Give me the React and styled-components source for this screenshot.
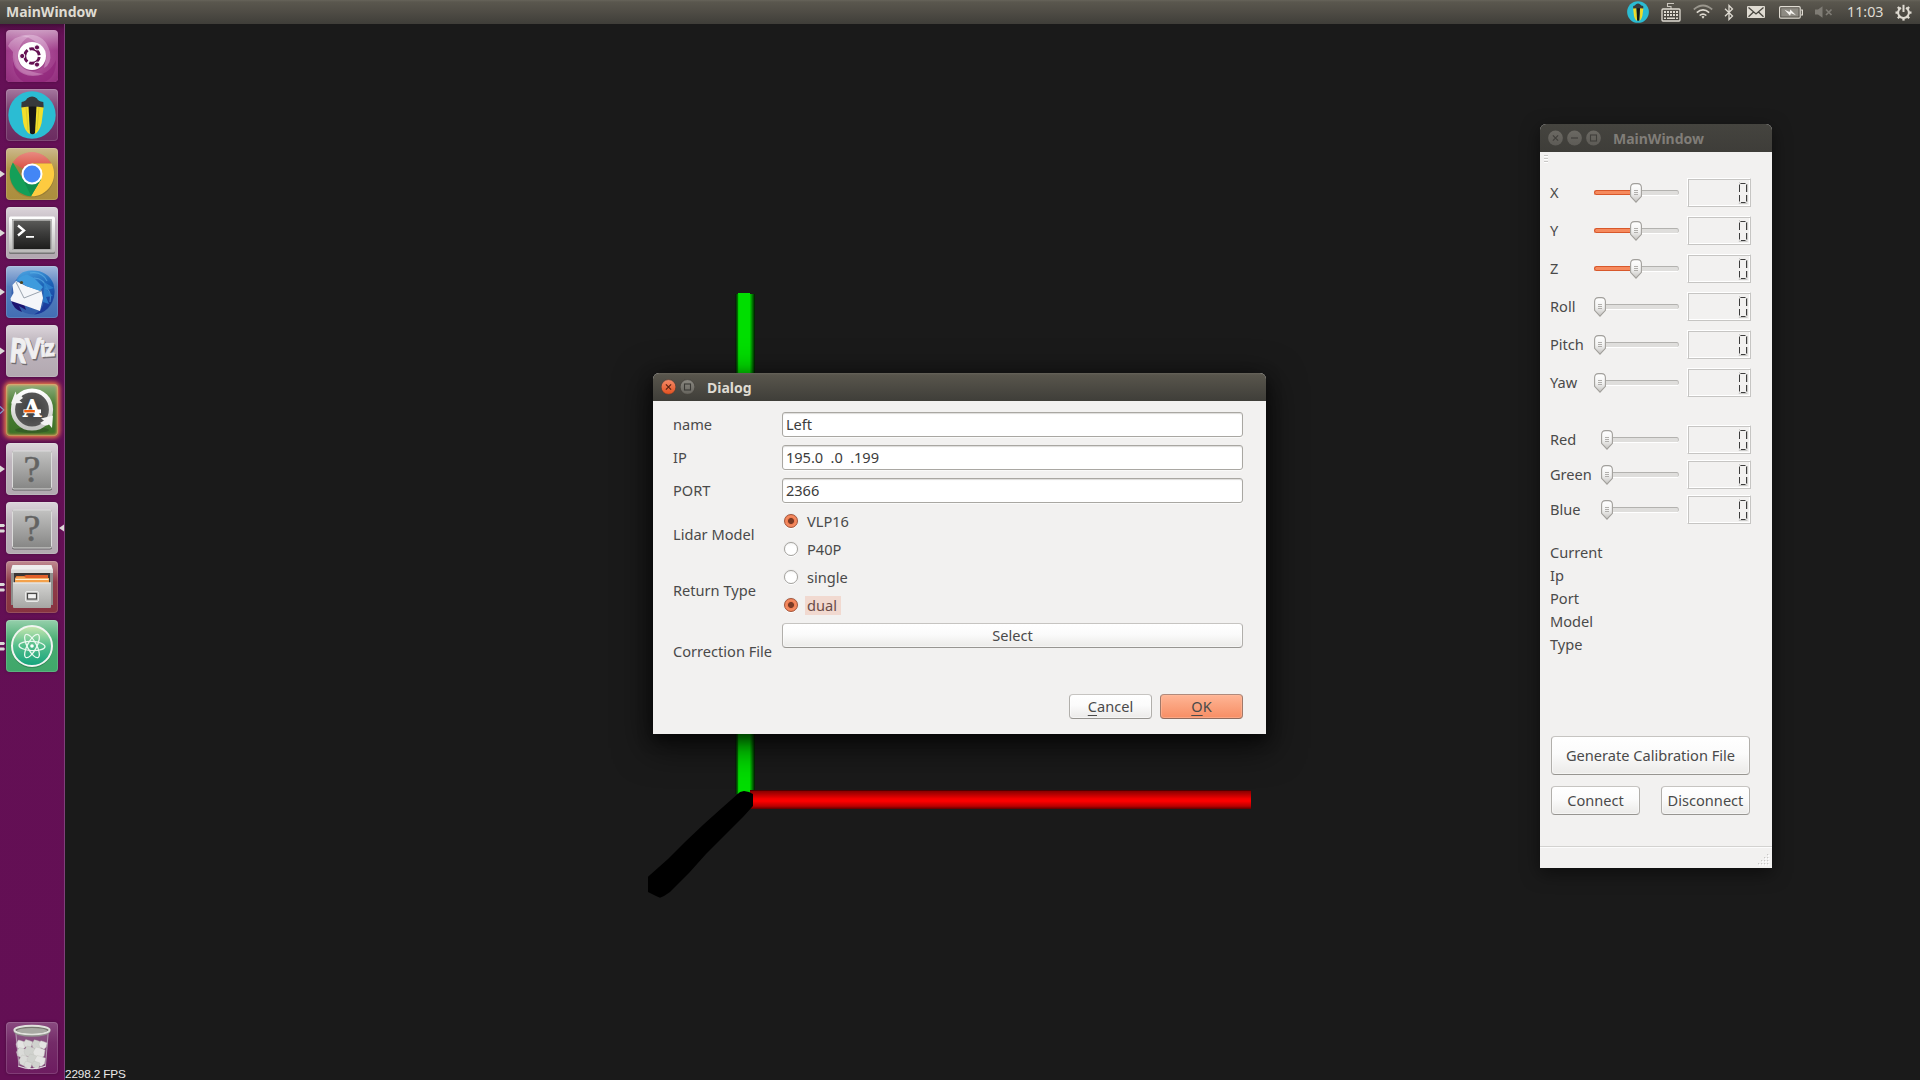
import React from "react";
import styled, { createGlobalStyle, css } from "styled-components";

const Global = createGlobalStyle`
  html, body { margin: 0; padding: 0; background: #1a1a1a; overflow: hidden; }
  * { box-sizing: border-box; }
`;

const Screen = styled.div`
  display: flex;
  flex-direction: column;
  width: 1920px;
  height: 1080px;
  overflow: hidden;
  background: #1a1a1a;
  color: #4a4a4a;
  font: 14.6px/20px "Noto Sans", "Open Sans", sans-serif;
`;

/* ---------- top panel ---------- */

const Panel = styled.header`
  display: flex;
  justify-content: space-between;
  height: 24px;
  flex: none;
  padding: 0 8px 0 6px;
  background: linear-gradient(#67645a 0, #5a574e 2px, #4f4c45 12px, #3f3e39 24px);
  color: #dfdbd2;
`;

const PanelTitle = styled.div`
  font-weight: 700;
  font-size: 14px;
  line-height: 23px;
`;

const Tray = styled.div`
  display: flex;
  align-items: center;
  height: 24px;
`;

const TrayItem = styled.div`
  display: flex;
  width: ${(p) => p.$w}px;
  margin-left: ${(p) => p.$gap || 0}px;
`;

const Clock = styled.div`
  width: 37px;
  margin-left: 14px;
  font-size: 14.3px;
  line-height: 24px;
  white-space: nowrap;
`;

/* ---------- launcher ---------- */

const Desktop = styled.div`
  display: flex;
  flex: 1;
  min-height: 0;
`;

const Launcher = styled.nav`
  display: flex;
  flex-direction: column;
  justify-content: space-between;
  width: 65px;
  padding: 6px 0 6px;
  border-right: 1px solid #80407a;
  background: linear-gradient(#430c39 0, #5c0f4e 5px, #651056 12px, #630f54 100%);
`;

const LauncherGroup = styled.div`
  display: flex;
  flex-direction: column;
  gap: 7px;
`;

const LauncherRow = styled.div`
  display: flex;
  align-items: center;
  height: 52px;
`;

const Marker = styled.div`
  display: flex;
  width: 6px;
  height: 12px;
`;

const Tile = styled.div`
  display: flex;
  width: 52px;
  height: 52px;
  border-radius: 4px;
  overflow: ${(p) => (p.$glow ? "visible" : "hidden")};
  background: ${(p) => p.$bg};
  box-shadow: ${(p) => (p.$glow ? "0 0 4px 2px #e8784a, inset 0 0 3px 1px #f0a060" : "0 0 3px rgba(0,0,0,.3)")},
    inset 0 0 0 1px rgba(255, 255, 255, 0.14);
`;

/* ---------- 3D view ---------- */

const Viewport = styled.main`
  position: relative;
  display: flex;
  align-items: flex-end;
  flex: 1;
`;

const Axes = styled.svg`
  position: absolute;
  left: 0;
  top: 0;
  display: block;
`;

const Fps = styled.div`
  height: 13px;
  color: #e9e9e9;
  font: 11.8px/14px "Liberation Sans", Arial, sans-serif;
  letter-spacing: -0.17px;
  white-space: nowrap;
`;

/* ---------- windows ---------- */

const Window = styled.section`
  position: absolute;
  left: ${(p) => p.$x}px;
  top: ${(p) => p.$y}px;
  display: flex;
  flex-direction: column;
  width: ${(p) => p.$w}px;
  height: ${(p) => p.$h}px;
  border-radius: 6px 6px 0 0;
  background: #f2f1f0;
  box-shadow: ${(p) =>
    p.$active ? "0 10px 34px 4px rgba(0,0,0,.6), 0 5px 14px rgba(0,0,0,.5)" : "0 5px 18px rgba(0,0,0,.5)"};
`;

const TitleBar = styled.div`
  display: flex;
  align-items: center;
  gap: 4px;
  height: 28px;
  flex: none;
  padding-left: 8px;
  border-radius: 6px 6px 0 0;
  background: ${(p) =>
    p.$active ? "linear-gradient(#66635a 0, #58554c 2px, #3f3e39 28px)" : "linear-gradient(#45443f 0, #3e3d39 100%)"};
  color: ${(p) => (p.$active ? "#dfdbd2" : "#807d78")};
`;

const WindowTitle = styled.div`
  margin-left: 8px;
  padding-top: 2px;
  font-weight: 700;
  font-size: 14px;
  line-height: 26px;
`;

const Label = styled.div`
  height: 20px;
  line-height: 18px;
  white-space: pre;
`;

const Button = styled.button`
  height: ${(p) => p.$h}px;
  width: ${(p) => p.$w}px;
  padding: 0 0 1px;
  border: 1px solid;
  border-radius: 4px;
  font: inherit;
  color: #4a4a4a;
  white-space: nowrap;
  ${(p) =>
    p.$primary
      ? css`
          border-color: #b08a7c #a0796a #8f6b5e;
          background: linear-gradient(#ffb596, #fba581 40%, #f78e65);
          box-shadow: inset 0 0 0 1px rgba(255, 190, 160, 0.5);
        `
      : css`
          border-color: #c6c4c1 #b1afab #979591;
          background: linear-gradient(#fff, #fbfbfb 45%, #ebeae8);
          box-shadow: inset 0 0 1px 1px rgba(255, 255, 255, 0.55);
        `}
`;

const Mnemonic = styled.span`
  text-decoration: underline;
  text-decoration-thickness: 1px;
  text-underline-offset: 3px;
  text-decoration-skip-ink: none;
`;

/* ---------- dialog ---------- */

const Form = styled.div`
  display: grid;
  grid-template-columns: 109px 461px;
  grid-template-rows: 25px 25px 25px 48px 48px 57px;
  row-gap: 8px;
  align-items: center;
  padding: 11px 0 0 20px;
`;

const TextField = styled.div`
  height: 25px;
  padding: 0 3px;
  border: 1px solid #a9a7a2;
  border-radius: 3px;
  background: #fff;
  box-shadow: inset 0 1px 1px #dddcda, 0 1px 0 #fafaf9;
  color: #3c3c3c;
  line-height: 22px;
  letter-spacing: -0.05px;
  white-space: pre;
`;

const RadioGroup = styled.div`
  display: flex;
  flex-direction: column;
  gap: 8px;
  padding-left: 2px;
`;

const RadioRow = styled.div`
  display: flex;
  align-items: center;
  gap: 7px;
  height: 20px;
`;

const RadioDot = styled.div`
  width: 14px;
  height: 14px;
  border: 1px solid ${(p) => (p.$on ? "#a3543a" : "#a4a29e")};
  border-radius: 50%;
  background: ${(p) =>
    p.$on
      ? "radial-gradient(circle, #7b3a25 0, #7b3a25 2.6px, #f07c50 3.4px, #f58d63 5px, #ef7243 7px)"
      : "linear-gradient(#f6f6f5, #fff 30%)"};
  box-shadow: 0 1px 0 #fff, 0 0 1px #bbb;
`;

const RadioText = styled.div`
  height: 19px;
  padding: 0 4px 0 2px;
  line-height: 18px;
  color: ${(p) => (p.$focus ? "#6a4c47" : "#4a4a4a")};
  background: ${(p) => (p.$focus ? "#f1d9d0" : "transparent")};
`;

const FileCell = styled.div`
  display: flex;
  align-items: flex-start;
  height: 57px;
`;

const DialogActions = styled.div`
  display: flex;
  justify-content: flex-end;
  gap: 8px;
  margin-top: auto;
  padding: 0 23px 15px 0;
`;

/* ---------- calibration panel ---------- */

const ToolHandle = styled.div`
  display: flex;
  height: 26px;
  padding: 3px 0 0 4px;
`;

const SliderList = styled.div`
  display: flex;
  flex-direction: column;
  gap: ${(p) => p.$gap}px;
  margin-bottom: ${(p) => p.$after}px;
  padding: 0 21px 0 10px;
`;

const SliderRow = styled.div`
  display: grid;
  grid-template-columns: ${(p) => p.$labelW}px 1fr 64px;
  align-items: center;
  height: 29px;
`;

const Track = styled.div`
  display: flex;
  align-items: center;
  height: 20px;
  margin-right: 8px;
`;

const Filled = styled.div`
  width: 36px;
  height: 5px;
  margin: -1px 0 0;
  border: 1px solid #d8582b;
  border-right: 0;
  border-radius: 3px 0 0 3px;
  background: #f68a5d;
`;

const Knob = styled.svg`
  display: block;
  flex: none;
`;

const Groove = styled.div`
  flex: 1;
  height: 5px;
  margin-top: -1px;
  border-top: 1px solid #b3b2af;
  border-right: 1px solid #c4c3c0;
  border-radius: 0 3px 3px 0;
  background: #dfdedc;
  box-shadow: 0 1px 0 #fff;
`;

const Lcd = styled.div`
  display: flex;
  justify-content: flex-end;
  width: 64px;
  height: 29px;
  padding: 2px 1px 0 0;
  border: 1px solid;
  border-color: #fff #c6c5c3 #c6c5c3 #fff;
  box-shadow: inset 1px 1px 0 #c6c5c3, inset -1px -1px 0 #fff;
`;

const InfoList = styled.div`
  display: flex;
  flex-direction: column;
  gap: 3px;
  padding: 0 10px;
`;

const ButtonGrid = styled.div`
  display: grid;
  grid-template-columns: 89px 89px;
  column-gap: 21px;
  row-gap: 11px;
  margin: auto 0 31px;
  padding-left: 11px;
`;

const Wide = styled.div`
  display: flex;
  grid-column: 1 / 3;
`;

const StatusBar = styled.footer`
  display: flex;
  align-items: flex-end;
  justify-content: flex-end;
  height: 22px;
  padding: 0 2px 2px 0;
  border-top: 1px solid #d3d2d0;
  box-shadow: inset 0 1px 0 #fcfcfc;
`;

/* ---------- drawings ---------- */

const Lantern = () => (
  <g>
    <circle cx="26" cy="26" r="23.7" fill="#2bbcd3" />
    <path d="M15.3 17.5 L23 17 L24 45 Q19 43 17.2 34 Z M37.7 17.5 L30 17 L28.6 45 Q33.5 43 35.6 34 Z" fill="#f2df2c" />
    <path d="M22.5 17 H30.5 L29 44 Q26.5 46.5 24 44 Z" fill="#161616" />
    <path d="M15.3 18.6 L15.6 13 Q20 12 21 9.5 Q26.2 5.5 31 9.5 Q32 12 37.3 13 L37.7 18.6 Q26 16.5 15.3 18.6 Z" fill="#37393b" />
    <path d="M20 18 L22 41 M33 18 L31 41" stroke="#c9ba26" strokeWidth="0.6" />
  </g>
);

const UbuntuIcon = () => (
  <svg width="52" height="52" viewBox="0 0 52 52">
    <defs>
      <radialGradient id="ub" cx=".5" cy=".5" r=".75">
        <stop offset="0" stopColor="#c070ae" />
        <stop offset=".5" stopColor="#a4438f" />
        <stop offset="1" stopColor="#8e2a79" />
      </radialGradient>
      <linearGradient id="ubs" x2="0" y2="1">
        <stop offset="0" stopColor="#fff" stopOpacity=".5" />
        <stop offset=".4" stopColor="#fff" stopOpacity="0" />
      </linearGradient>
    </defs>
    <rect width="52" height="52" rx="4" fill="url(#ub)" />
    <path d="M14 6 Q38 0 44 22 Q46 34 38 38 Q42 22 30 12 Q22 6 14 6Z" fill="#d9a6cf" opacity=".55" />
    <path d="M8 24 Q8 46 30 45 Q44 44 50 30 Q50 48 38 52 H18 Q4 44 8 24Z" fill="#8a1b74" opacity=".5" />
    <path d="M2 16 Q8 4 24 6 Q12 12 12 28 Q16 42 38 44 Q20 50 10 38 Q6 32 7 22" fill="#e3b7da" opacity=".4" />
    <rect width="52" height="52" rx="4" fill="url(#ubs)" />
    <circle cx="26" cy="27" r="14.3" fill="#7b1f69" opacity=".4" />
    <circle cx="26" cy="26" r="14" fill="#fff" />
    <circle cx="26" cy="26" r="7.3" fill="none" stroke="#651053" strokeWidth="2.9" strokeDasharray="13.2 2.09" strokeDashoffset="-1" />
    <g fill="#651053" stroke="#fff" strokeWidth="1">
      <circle cx="16.2" cy="26" r="2.6" />
      <circle cx="31" cy="17.4" r="2.6" />
      <circle cx="31" cy="34.6" r="2.6" />
    </g>
  </svg>
);

const LanternIcon = () => (
  <svg width="52" height="52" viewBox="0 0 52 52">
    <Lantern />
  </svg>
);

const ChromeIcon = () => (
  <svg width="52" height="52" viewBox="0 0 52 52">
    <defs>
      <linearGradient id="chr" x2="0" y2="1">
        <stop offset="0" stopColor="#e88a80" />
        <stop offset="1" stopColor="#d63f33" />
      </linearGradient>
    </defs>
    <circle cx="26" cy="27" r="22.5" fill="#6d5a22" opacity=".3" />
    <path d="M26 26 L6.7 14.8 A22.3 22.3 0 0 1 45.3 15.6 L26 15.6 Z" fill="url(#chr)" />
    <path d="M26 26 L26 15.6 L45.6 15.6 A22.3 22.3 0 0 1 25 48.2 L35 31.2 Z" fill="#fdcb40" />
    <path d="M26 26 L35 31.2 L25 48.2 A22.3 22.3 0 0 1 6.9 14.6 L17 31.2 Z" fill="#149f58" />
    <path d="M17 31.2 L25 47.8 L35 31.4 Z" fill="#0f8e4e" />
    <circle cx="26" cy="26" r="10.5" fill="#fff" />
    <circle cx="26" cy="26" r="8.5" fill="#4386f5" />
  </svg>
);

const TerminalIcon = () => (
  <svg width="52" height="52" viewBox="0 0 52 52">
    <defs>
      <linearGradient id="te" x2="0" y2="1">
        <stop offset="0" stopColor="#5a5a58" />
        <stop offset=".45" stopColor="#3c3c3b" />
        <stop offset="1" stopColor="#1d1d1c" />
      </linearGradient>
      <linearGradient id="tf" x2="0" y2="1">
        <stop offset="0" stopColor="#fff" />
        <stop offset="1" stopColor="#b9b9b7" />
      </linearGradient>
    </defs>
    <rect x="3" y="10" width="46" height="37" rx="1.5" fill="#777" />
    <rect x="3" y="9.5" width="46" height="36" rx="1.5" fill="url(#tf)" />
    <rect x="6.5" y="12.5" width="39" height="30" fill="#e8e8e6" stroke="#909090" strokeWidth=".6" />
    <rect x="7.5" y="13.5" width="37" height="28.5" fill="url(#te)" />
    <path d="M12 18.5 L18 23.5 L12 28.5" fill="none" stroke="#fff" strokeWidth="2.4" />
    <path d="M20 29.8 H28" stroke="#fff" strokeWidth="1.8" />
  </svg>
);

const ThunderbirdIcon = () => (
  <svg width="52" height="52" viewBox="0 0 52 52">
    <defs>
      <linearGradient id="tb" x1="0" y1="0" x2=".3" y2="1">
        <stop offset="0" stopColor="#4fa8e4" />
        <stop offset=".5" stopColor="#1c64b8" />
        <stop offset="1" stopColor="#1b3a9a" />
      </linearGradient>
    </defs>
    <circle cx="27" cy="27" r="21.5" fill="#2a55a6" opacity=".65" />
    <path d="M10 16 Q12 5 25 4.5 Q42 4 47.5 18 Q51 32 42 42 Q36 48 28 48.5 Q38 43 37.5 35 L36 20 L22 13 Z" fill="url(#tb)" />
    <path d="M24 7 Q36 5 41 15 M28 12 Q38 12 42 24 M39 22 Q46 24 44 36" stroke="#6ec1ef" strokeWidth="1.2" fill="none" opacity=".5" />
    <path d="M38 16 L48 22 L41 24 L47 30 L40 31 L43 38 L37 36 Z" fill="#2f86d0" opacity=".8" />
    <path d="M5 34 Q7 43 16 46 L13 40 L20 44 L18 38 Z" fill="#1c1470" />
    <path d="M4.5 32.5 L7.5 27 L6.5 19 L10 15 L20 20 L35.5 25 L37 32 L34 45 L20 40 L5 35 Z" fill="#f4f6f9" />
    <path d="M10 16 L18 32 L35.5 25" fill="none" stroke="#9aa3ae" strokeWidth="1" />
    <path d="M10.5 19 Q11 10 21 8.5 L28 12 L37 21 L34 25 L20 20 L12 14Z" fill="#3f9bdd" />
    <circle cx="15.5" cy="16.5" r="1.6" fill="#4d4520" />
  </svg>
);

const RVIZ_LETTERS = [
  { ch: "R", x: 4, y: 37.5, size: 33, sx: 0.78, tilt: "rotate(5 12 26)" },
  { ch: "V", x: 19.5, y: 33.5, size: 28, sx: 0.82, tilt: "rotate(-2 28 24)" },
  { ch: "i", x: 34.5, y: 31.5, size: 22, sx: 0.85, tilt: "rotate(-4 36 25)" },
  { ch: "z", x: 38.5, y: 31, size: 24, sx: 0.9, tilt: "rotate(-4 43 25)" },
];

const RvizIcon = () => (
  <svg width="52" height="52" viewBox="0 0 52 52">
    <g fontFamily="Lato, sans-serif" fontWeight="900" strokeWidth="1.1" strokeLinejoin="round">
      {RVIZ_LETTERS.map((l) => (
        <g key={l.ch} transform={l.tilt}>
          <g transform={`translate(${l.x} ${l.y}) scale(${l.sx} 1)`} fontSize={l.size}>
            <text x="1.4" y="1.5" fill="#716c70" stroke="#716c70">{l.ch}</text>
            <text x="0" y="0" fill="#f0eff0" stroke="#f0eff0">{l.ch}</text>
          </g>
        </g>
      ))}
    </g>
  </svg>
);

const UpdaterIcon = () => (
  <svg width="52" height="52" viewBox="0 0 52 52">
    <defs>
      <linearGradient id="up" x2="0" y2="1">
        <stop offset="0" stopColor="#fff" />
        <stop offset="1" stopColor="#c3c3c1" />
      </linearGradient>
      <radialGradient id="upd">
        <stop offset="0" stopColor="#3a3a3a" />
        <stop offset="1" stopColor="#5a5a5a" />
      </radialGradient>
    </defs>
    <ellipse cx="26" cy="46" rx="17" ry="3" fill="#2c4a22" opacity=".5" />
    <circle cx="26" cy="25.5" r="19" fill="url(#upd)" stroke="url(#up)" strokeWidth="4.2" />
    <path d="M5 19.5 L9.5 7.5 L11 12 Q14 9 17 14 L13.5 16.5 L16.5 19 Z" fill="#f3f3f2" />
    <path d="M47 31.5 L46 44 L43 40.5 Q39 43 34 39 L38 36.5 L35 34.5 Z" fill="#f3f3f2" />
    <text x="26" y="33" textAnchor="middle" fontFamily="DejaVu Serif, serif" fontWeight="700" fontSize="24" fill="#fff">A</text>
    <rect x="17.5" y="25.4" width="17.5" height="3.8" fill="#fff" />
    <rect x="18.2" y="26" width="10.6" height="2.4" fill="#f2600c" />
  </svg>
);

const UnknownIcon = () => (
  <svg width="52" height="52" viewBox="0 0 52 52">
    <defs>
      <linearGradient id="qm" x2="0" y2="1">
        <stop offset="0" stopColor="#c2c2c1" />
        <stop offset="1" stopColor="#868685" />
      </linearGradient>
    </defs>
    <rect x="6" y="8" width="40" height="39.5" rx="2" fill="#5f5d5e" />
    <rect x="6.5" y="8" width="39" height="38" rx="1.5" fill="url(#qm)" stroke="#dcdcdb" strokeWidth="1" />
    <text x="26" y="38.8" textAnchor="middle" fontFamily="Liberation Serif, serif" fontSize="38" fill="#636362" stroke="#636362" strokeWidth=".5">?</text>
  </svg>
);

const FilesIcon = () => (
  <svg width="52" height="52" viewBox="0 0 52 52">
    <defs>
      <linearGradient id="fi" x2="0" y2="1">
        <stop offset="0" stopColor="#d4d4d2" />
        <stop offset="1" stopColor="#a6a6a4" />
      </linearGradient>
    </defs>
    <path d="M6.5 4 H45.5 L47 9 V44 H5 V9 Z" fill="#8e8e8c" />
    <path d="M6.5 4 H45.5 L47 9 H5 Z" fill="#efefee" />
    <rect x="5" y="8.5" width="42" height="3.5" fill="#dcdcda" />
    <rect x="8" y="12" width="36" height="10" fill="#3b3634" />
    <path d="M10 15 H18 L20 14 H42 V22 H9 Z" fill="#e2602a" />
    <path d="M9 17 L11 15.5 H18 L20 17 H43 V22 H9Z" fill="#f3a14b" />
    <rect x="9.5" y="17.8" width="33" height="1.2" fill="#fff2d5" />
    <path d="M7 21.5 H45 V46 Q45 47 44 47 H8 Q7 47 7 46 Z" fill="url(#fi)" />
    <path d="M7 22 H45" stroke="#ececeb" strokeWidth="1" />
    <rect x="19.5" y="30.5" width="13" height="10" rx="1.5" fill="#c9c9c7" stroke="#e9e9e8" strokeWidth="1" />
    <rect x="21.5" y="32.5" width="9" height="5.5" fill="#f2f2f1" stroke="#4a4a49" strokeWidth="1.2" />
  </svg>
);

const AtomIcon = () => (
  <svg width="52" height="52" viewBox="0 0 52 52">
    <defs>
      <linearGradient id="at" x2="0" y2="1">
        <stop offset="0" stopColor="#c9e8b0" />
        <stop offset=".5" stopColor="#52bd8b" />
        <stop offset="1" stopColor="#12a37c" />
      </linearGradient>
    </defs>
    <circle cx="26" cy="27" r="21" fill="#1e5a3c" opacity=".4" />
    <circle cx="26" cy="26" r="20" fill="url(#at)" stroke="#f1f5f1" strokeWidth="2" />
    <g fill="none" stroke="#e9f8ee" strokeWidth="1.3">
      <ellipse cx="26" cy="26" rx="13" ry="4.6" transform="rotate(3 26 26)" />
      <ellipse cx="26" cy="26" rx="13" ry="4.6" transform="rotate(62 26 26)" />
      <ellipse cx="26" cy="26" rx="13" ry="4.6" transform="rotate(118 26 26)" />
    </g>
    <circle cx="26" cy="26" r="1.8" fill="#fff" />
  </svg>
);

const CRUMPLES = [
  [15, 23, 5], [22, 22, 4.5], [31, 23, 5.2], [37, 23, 4.2], [16, 31, 5.5], [24, 30, 6],
  [33, 31, 6], [19, 39, 6], [27, 38, 6], [34, 39, 5.5], [22, 43, 4], [30, 43, 4],
];

const TrashIcon = () => (
  <svg width="52" height="52" viewBox="0 0 52 52">
    <path d="M9 10 H43 L39.5 45 Q26 50 12.5 45 Z" fill="#a993a8" opacity=".32" />
    {CRUMPLES.map(([x, y, r], i) => (
      <path
        key={i}
        d={`M${x - r} ${y - 1} L${x - r / 2} ${y - r} L${x + 1} ${y - r + 1} L${x + r} ${y - r / 2} L${x + r - 1} ${y + r / 2} L${x + 1} ${y + r} L${x - r + 1} ${y + r / 2}Z`}
        fill={i % 3 === 0 ? "#e4e4e2" : i % 3 === 1 ? "#dadbd8" : "#d0d2ce"}
        stroke="#bfc1bc"
        strokeWidth=".4"
      />
    ))}
    <path d="M12 44 Q26 49.5 40 44" stroke="#e7e3e6" strokeWidth="1" fill="none" />
    <path d="M10 12 L13 44 M42 12 L39.5 44" stroke="#bda9bb" strokeWidth=".8" />
    <ellipse cx="26" cy="9.6" rx="18.3" ry="5.2" fill="#92938f" />
    <ellipse cx="26" cy="8" rx="17.6" ry="4.2" fill="#77766f" stroke="#e1e2dd" strokeWidth="2" />
    <ellipse cx="26" cy="8.7" rx="15" ry="2.8" fill="#a8a9a3" />
  </svg>
);

const MARKS = {
  one: <path d="M0 2.5 L5 6 L0 9.5 Z" fill="#dcdad8" />,
  outline: <path d="M0 2.5 L4 6 L0 9.5" fill="none" stroke="#6fa8e8" strokeWidth="1.1" />,
  two: (
    <g fill="#dcdad8">
      <path d="M0 2 H4 L5 3.5 L4 5 H0Z" />
      <path d="M0 7.5 H4 L5 9 L4 10.5 H0Z" />
    </g>
  ),
  focus: <path d="M6 2.5 L1 6 L6 9.5 Z" fill="#dcdad8" />,
};

const Mark = ({ kind }) => (
  <Marker>
    {kind && (
      <svg width="6" height="12" viewBox="0 0 6 12">
        {MARKS[kind]}
      </svg>
    )}
  </Marker>
);

const GREY_TILE = "linear-gradient(#dcd5db 0, #bfb6be 35%, #b2a8b0 100%)";

const APPS = [
  { bg: "#a03a8c", icon: UbuntuIcon },
  { bg: "linear-gradient(#a5789f, #7a3f70 40%, #6b2b60)", icon: LanternIcon },
  { bg: "linear-gradient(#cdb98c, #b09448 40%, #ac8e3d)", icon: ChromeIcon, mark: "one" },
  { bg: GREY_TILE, icon: TerminalIcon, mark: "one" },
  { bg: "linear-gradient(#a3bbdd, #5680bf 40%, #426eb3)", icon: ThunderbirdIcon, mark: "one" },
  { bg: GREY_TILE, icon: RvizIcon, mark: "one" },
  { bg: "linear-gradient(#8fae7c, #497d35 40%, #3b7126)", icon: UpdaterIcon, mark: "outline", glow: true },
  { bg: GREY_TILE, icon: UnknownIcon, mark: "one" },
  { bg: GREY_TILE, icon: UnknownIcon, mark: "two", focused: true },
  { bg: "linear-gradient(#c08c92, #8f3c49 40%, #873340)", icon: FilesIcon, mark: "two" },
  { bg: "linear-gradient(#96d0ac, #47ab70 40%, #40a76a)", icon: AtomIcon, mark: "two" },
];

const LauncherItem = ({ app }) => {
  const Icon = app.icon;
  return (
    <LauncherRow>
      <Mark kind={app.mark} />
      <Tile $bg={app.bg} $glow={app.glow}>
        <Icon />
      </Tile>
      <Mark kind={app.focused ? "focus" : null} />
    </LauncherRow>
  );
};

/* tray drawings */

const KeyboardIcon = () => (
  <svg width="20" height="20" viewBox="0 0 20 20" fill="none" stroke="#dfdbd2">
    <path d="M10 7 V4.5 H6.5 V1.5 H13" strokeWidth="1.1" opacity=".85" />
    <rect x="1" y="7" width="18" height="12" rx="1" strokeWidth="1.3" />
    <path d="M3 10 H17 M3 13 H17" strokeWidth="1.9" strokeDasharray="2 1" />
    <path d="M3 16.3 H17" strokeWidth="1.6" strokeDasharray="2 1 8 1" />
  </svg>
);

const WifiIcon = () => (
  <svg width="20" height="16" viewBox="0 0 20 16" fill="none" stroke="#dfdbd2">
    <path d="M0.8 5.5 Q10 -2.5 19.2 5.5" strokeWidth="1.7" opacity=".5" />
    <path d="M3.8 8.6 Q10 3.2 16.2 8.6" strokeWidth="1.7" />
    <path d="M6.6 11.5 Q10 8.6 13.4 11.5" strokeWidth="1.6" />
    <path d="M8.5 12.8 Q10 11.4 11.5 12.8 L10 14.8 Z" fill="#dfdbd2" stroke="none" />
  </svg>
);

const BluetoothIcon = () => (
  <svg width="10" height="17" viewBox="0 0 10 17" fill="none" stroke="#dfdbd2" strokeWidth="1.3">
    <path d="M1 4.8 L8.5 12 L5 15.5 V1.5 L8.5 5 L1 12.2" />
  </svg>
);

const MailIcon = () => (
  <svg width="18" height="12" viewBox="0 0 18 12">
    <rect width="18" height="12" rx="1" fill="#dfdbd2" />
    <path d="M1.5 1.5 L9 8 L16.5 1.5 M1.5 10.8 L6.5 6 M16.5 10.8 L11.5 6" stroke="#4a4841" strokeWidth="1.3" fill="none" />
  </svg>
);

const BatteryIcon = () => (
  <svg width="24" height="13" viewBox="0 0 24 13">
    <rect x=".6" y=".6" width="20.6" height="11.6" rx="1.2" fill="none" stroke="#dfdbd2" strokeWidth="1.2" />
    <rect x="2.2" y="2.2" width="17.4" height="8.4" fill="#8d8a82" />
    <path d="M22 4 H23.4 V9 H22" fill="none" stroke="#dfdbd2" strokeWidth="1.2" />
    <path d="M5.5 3.8 L10.6 6 L11.4 3.4 L17 9.2 L12 7.3 L11 9.8 Z" fill="#f4f2ee" />
  </svg>
);

const MuteIcon = () => (
  <svg width="18" height="12" viewBox="0 0 18 12">
    <path d="M0 3.5 H3 L7.5 .3 V11.7 L3 8.5 H0 Z" fill="#7f7c75" />
    <path d="M11 3.5 L16.5 9 M16.5 3.5 L11 9" stroke="#7f7c75" strokeWidth="1.7" />
  </svg>
);

const GearIcon = () => (
  <svg width="17" height="17" viewBox="0 0 17 17" fill="none" stroke="#dfdbd2">
    <path d="M6 3.8 A5.4 5.4 0 1 0 11 3.8" strokeWidth="2" />
    <path d="M8.5 0.8 V8" strokeWidth="2" />
    {[45, 90, 135, 180, 225, 270, 315].map((a) => (
      <path key={a} d="M8.5 3 V0.6" strokeWidth="2.3" transform={`rotate(${a} 8.5 8.6)`} />
    ))}
  </svg>
);

/* window drawings */

const WindowControl = ({ kind, active }) => {
  const close = active && kind === "close";
  const stroke = close ? "#5c2312" : active ? "#3a3935" : "#403f3b";
  const id = `wc-${kind}-${active ? "on" : "off"}`;
  return (
    <svg width="15" height="16" viewBox="0 0 15 16">
      <defs>
        <linearGradient id={id} x2="0" y2="1">
          <stop offset="0" stopColor={close ? "#f58b69" : active ? "#8b8981" : "#6b6963"} />
          <stop offset="1" stopColor={close ? "#e2501f" : active ? "#66645d" : "#5d5b56"} />
        </linearGradient>
      </defs>
      <circle cx="7.5" cy="8" r="7.4" fill={`url(#${id})`} stroke={active ? "#3a3833" : "none"} strokeWidth=".6" />
      {kind === "close" && <path d="M4.9 5.4 L10.1 10.6 M10.1 5.4 L4.9 10.6" stroke={stroke} strokeWidth="1.2" />}
      {kind === "min" && <path d="M4 8 H11" stroke={stroke} strokeWidth="1.2" />}
      {kind === "max" && <rect x="4.5" y="5" width="6" height="6" fill="none" stroke={stroke} strokeWidth="1.1" />}
    </svg>
  );
};

const SliderKnob = () => (
  <Knob width="12" height="20" viewBox="0 0 12 20">
    <defs>
      <linearGradient id="kn" x2="0" y2="1">
        <stop offset="0" stopColor="#fff" />
        <stop offset=".5" stopColor="#f3f3f2" />
        <stop offset="1" stopColor="#c4c2bf" />
      </linearGradient>
    </defs>
    <path d="M.6 4.5 Q.6 .6 4.5 .6 H7.5 Q11.4 .6 11.4 4.5 V13.4 L6 19.2 L.6 13.4 Z" fill="url(#kn)" stroke="#a19f9b" strokeWidth="1.1" />
    <path d="M4 7.5 H8 M4 9.5 H8 M4 11.5 H8" stroke="#a9a7a4" strokeWidth=".9" />
  </Knob>
);

const LcdZero = () => (
  <svg width="11" height="24" viewBox="0 0 11 24">
    <g stroke="#b9b8b6" strokeWidth="1">
      <path d="M1.2 1.5 L3 3 M.8 22.2 H9.5" />
    </g>
    <g stroke="#3d3d3d" strokeWidth="1">
      <path d="M2.5 2.5 H7.5 M3 21.5 H7.5 M1.5 3.5 V11 M8.5 3.5 V11 M1.5 14 V20.5 M8.5 14 V20.5" />
    </g>
    <path d="M9.5 3 V11 M9.5 14 V21" stroke="#c9c8c6" strokeWidth="1" />
  </svg>
);

const SliderControl = ({ label, mid, labelW }) => (
  <SliderRow $labelW={labelW}>
    <Label>{label}</Label>
    <Track>
      {mid && <Filled />}
      <SliderKnob />
      <Groove />
    </Track>
    <Lcd>
      <LcdZero />
    </Lcd>
  </SliderRow>
);

const Radio = ({ text, on, focus }) => (
  <RadioRow>
    <RadioDot $on={on} />
    <RadioText $focus={focus}>{text}</RadioText>
  </RadioRow>
);

const AxesDrawing = () => (
  <Axes width="1855" height="1056" viewBox="65 24 1855 1056">
    <defs>
      <linearGradient id="gx" x2="1" y2="0">
        <stop offset="0" stopColor="#001c00" />
        <stop offset=".12" stopColor="#007d00" />
        <stop offset=".16" stopColor="#00de00" />
        <stop offset=".72" stopColor="#00de00" />
        <stop offset=".84" stopColor="#008a00" />
        <stop offset="1" stopColor="#001600" />
      </linearGradient>
      <linearGradient id="rx" x2="0" y2="1">
        <stop offset="0" stopColor="#2a0000" />
        <stop offset=".07" stopColor="#8c0000" />
        <stop offset=".45" stopColor="#f00000" />
        <stop offset=".58" stopColor="#ff0000" />
        <stop offset=".85" stopColor="#b80000" />
        <stop offset="1" stopColor="#5c0000" />
      </linearGradient>
    </defs>
    <rect x="735.5" y="294" width="19.5" height="500" fill="url(#gx)" />
    <rect x="738" y="293" width="12" height="1" fill="#00de00" />
    <rect x="750" y="790" width="501" height="19" fill="url(#rx)" />
    <path d="M648 876.7 V892 L656 896 L660 897.7 L664 896 L670 892 L689 873 L706 854 L724 836 L743 817 L753 806 V794 L749 792 L744 791 L740 792 L723 807 L704 824 L685 842 L668 859 Z" fill="#000" />
  </Axes>
);

const SizeGrip = () => (
  <svg width="12" height="12" viewBox="0 0 12 12">
    {[0, 1, 2, 3].map((r) =>
      [0, 1, 2, 3].filter((c) => c >= 3 - r).map((c) => (
        <g key={`${r}${c}`}>
          <rect x={1 + c * 3} y={1 + r * 3} width="1.5" height="1.5" fill="#fff" />
          <rect x={c * 3} y={r * 3} width="1.2" height="1.2" fill="#c9c8c6" />
        </g>
      ))
    )}
  </svg>
);

const CalibrationWindow = () => (
  <Window $x={1475} $y={100} $w={232} $h={744}>
    <TitleBar>
      <WindowControl kind="close" />
      <WindowControl kind="min" />
      <WindowControl kind="max" />
      <WindowTitle>MainWindow</WindowTitle>
    </TitleBar>
    <ToolHandle>
      <svg width="5" height="9" viewBox="0 0 5 9">
        <path d="M0 .5 H4 M0 3.5 H4 M0 6.5 H4" stroke="#c9c8c6" />
        <path d="M0 1.5 H4 M0 4.5 H4 M0 7.5 H4" stroke="#fff" />
      </svg>
    </ToolHandle>
    <SliderList $gap={9} $after={28}>
      {["X", "Y", "Z"].map((l) => (
        <SliderControl key={l} label={l} labelW={44} mid />
      ))}
      {["Roll", "Pitch", "Yaw"].map((l) => (
        <SliderControl key={l} label={l} labelW={44} />
      ))}
    </SliderList>
    <SliderList $gap={6} $after={19}>
      {["Red", "Green", "Blue"].map((l) => (
        <SliderControl key={l} label={l} labelW={51} />
      ))}
    </SliderList>
    <InfoList>
      {["Current", "Ip", "Port", "Model", "Type"].map((l) => (
        <Label key={l}>{l}</Label>
      ))}
    </InfoList>
    <ButtonGrid>
      <Wide>
        <Button $w={199} $h={39}>Generate Calibration File</Button>
      </Wide>
      <Button $w={89} $h={29}>Connect</Button>
      <Button $w={89} $h={29}>Disconnect</Button>
    </ButtonGrid>
    <StatusBar>
      <SizeGrip />
    </StatusBar>
  </Window>
);

const LidarDialog = () => (
  <Window $x={588} $y={349} $w={613} $h={361} $active>
    <TitleBar $active>
      <WindowControl kind="close" active />
      <WindowControl kind="max" active />
      <WindowTitle>Dialog</WindowTitle>
    </TitleBar>
    <Form>
      <Label>name</Label>
      <TextField>Left</TextField>
      <Label>IP</Label>
      <TextField>{"195.0  .0  .199"}</TextField>
      <Label>PORT</Label>
      <TextField>2366</TextField>
      <Label>Lidar Model</Label>
      <RadioGroup>
        <Radio text="VLP16" on />
        <Radio text="P40P" />
      </RadioGroup>
      <Label>Return Type</Label>
      <RadioGroup>
        <Radio text="single" />
        <Radio text="dual" on focus />
      </RadioGroup>
      <Label>Correction File</Label>
      <FileCell>
        <Button $w={461} $h={25}>Select</Button>
      </FileCell>
    </Form>
    <DialogActions>
      <Button $w={83} $h={25}>
        <Mnemonic>C</Mnemonic>ancel
      </Button>
      <Button $w={83} $h={25} $primary>
        <Mnemonic>O</Mnemonic>K
      </Button>
    </DialogActions>
  </Window>
);

export default function App() {
  return (
    <Screen>
      <Global />
      <Panel>
        <PanelTitle>MainWindow</PanelTitle>
        <Tray>
          <TrayItem $w={22}>
            <svg width="22" height="22" viewBox="2 2 48 48">
              <Lantern />
            </svg>
          </TrayItem>
          <TrayItem $w={20} $gap={12}><KeyboardIcon /></TrayItem>
          <TrayItem $w={20} $gap={12}><WifiIcon /></TrayItem>
          <TrayItem $w={10} $gap={11}><BluetoothIcon /></TrayItem>
          <TrayItem $w={18} $gap={13}><MailIcon /></TrayItem>
          <TrayItem $w={24} $gap={14}><BatteryIcon /></TrayItem>
          <TrayItem $w={18} $gap={12}><MuteIcon /></TrayItem>
          <Clock>11:03</Clock>
          <TrayItem $w={17} $gap={11}><GearIcon /></TrayItem>
        </Tray>
      </Panel>
      <Desktop>
        <Launcher>
          <LauncherGroup>
            {APPS.map((app, i) => (
              <LauncherItem key={i} app={app} />
            ))}
          </LauncherGroup>
          <LauncherItem app={{ bg: "linear-gradient(#8a4b80, #742b68 40%, #6d1c60)", icon: TrashIcon }} />
        </Launcher>
        <Viewport>
          <AxesDrawing />
          <Fps>2298.2 FPS</Fps>
          <CalibrationWindow />
          <LidarDialog />
        </Viewport>
      </Desktop>
    </Screen>
  );
}
